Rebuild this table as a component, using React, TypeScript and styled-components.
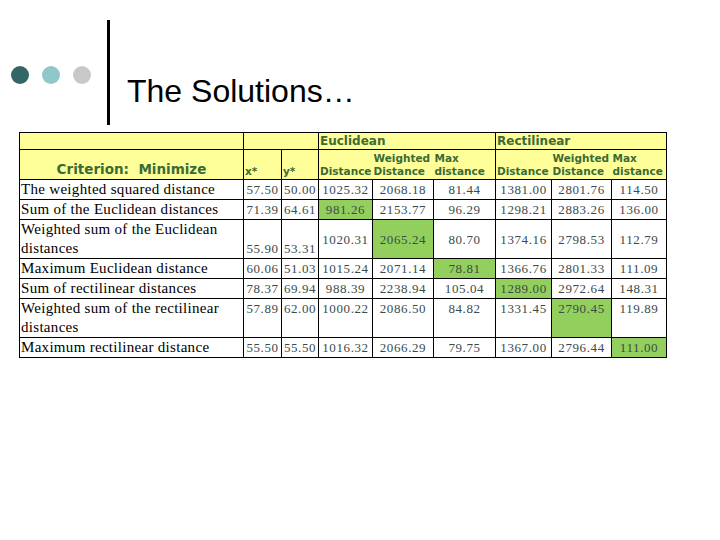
import styled, { createGlobalStyle } from "styled-components";

const GlobalStyle = createGlobalStyle`
  html, body {
    margin: 0;
    padding: 0;
    background: #ffffff;
  }
  body {
    width: 720px;
    height: 540px;
    overflow: hidden;
    font-family: "Liberation Sans", Arial, sans-serif;
  }
`;

const Page = styled.div`
  display: flex;
  flex-direction: column;
  width: 720px;
  height: 540px;
  padding-top: 20px;
  box-sizing: border-box;
`;

const Header = styled.header`
  display: flex;
  align-items: flex-start;
  height: 112px;
  padding-left: 11px;
`;

const Dots = styled.div`
  display: flex;
  gap: 13px;
  margin-top: 46px;
`;

const Dot = styled.span<{ $color: string }>`
  width: 18px;
  height: 18px;
  border-radius: 50%;
  background: ${({ $color }) => $color};
`;

const Rule = styled.div`
  width: 3px;
  height: 105px;
  margin-left: 16px;
  background: #000000;
`;

const Title = styled.h1`
  margin: 55px 0 0 17px;
  font-family: "Liberation Sans", Arial, sans-serif;
  font-size: 32px;
  font-weight: normal;
  line-height: 1;
  color: #000000;
`;

const Grid = styled.table`
  margin-left: 19px;
  width: 648px;
  border-collapse: collapse;
  table-layout: fixed;
`;

type TOpen = { $openLeft?: boolean; $openRight?: boolean };

const Head = styled.th<TOpen>`
  background: #ffff99;
  color: #3a6b35;
  border: 1px solid #000000;
  ${({ $openLeft }) => ($openLeft ? "border-left-style: none;" : "")}
  ${({ $openRight }) => ($openRight ? "border-right-style: none;" : "")}
  padding: 0 1px;
  font-family: "DejaVu Sans", Verdana, sans-serif;
  font-weight: bold;
  text-align: left;
`;

const GroupHead = styled(Head)`
  font-size: 12px;
  line-height: 14px;
  vertical-align: middle;
`;

const SubHead = styled(Head)`
  font-size: 10.5px;
  line-height: 13px;
  vertical-align: bottom;
  padding-bottom: 1px;
`;

const CriterionHead = styled(Head)`
  font-size: 13.5px;
  line-height: 16px;
  text-align: center;
  vertical-align: bottom;
  padding-bottom: 2px;
`;

const Row = styled.tr<{ $h: number }>`
  height: ${({ $h }) => $h}px;
`;

const LabelCell = styled.td`
  border: 1px solid #000000;
  padding: 0 1px;
  font-family: "Liberation Serif", "Times New Roman", serif;
  font-size: 15px;
  letter-spacing: 0.3px;
  line-height: 19px;
  color: #000000;
  vertical-align: middle;
`;

const NumCell = styled.td<{ $hl?: boolean; $valign?: string }>`
  border: 1px solid #000000;
  padding: 0;
  background: ${({ $hl }) => ($hl ? "#93cf5c" : "#ffffff")};
  font-family: "Liberation Serif", "Times New Roman", serif;
  font-size: 13px;
  letter-spacing: 0.6px;
  line-height: 19px;
  color: #3b4b4b;
  text-align: center;
  vertical-align: ${({ $valign }) => $valign || "middle"};
`;

type TRow = {
  label: string;
  x: string;
  y: string;
  values: string[];
  hl: number;
  h: number;
  xyAlign?: string;
  align?: string;
};

const rows: TRow[] = [
  { label: "The weighted squared distance", x: "57.50", y: "50.00", values: ["1025.32", "2068.18", "81.44", "1381.00", "2801.76", "114.50"], hl: -1, h: 19 },
  { label: "Sum of the Euclidean distances", x: "71.39", y: "64.61", values: ["981.26", "2153.77", "96.29", "1298.21", "2883.26", "136.00"], hl: 0, h: 20 },
  { label: "Weighted sum of the Euclidean distances", x: "55.90", y: "53.31", values: ["1020.31", "2065.24", "80.70", "1374.16", "2798.53", "112.79"], hl: 1, h: 39, xyAlign: "bottom" },
  { label: "Maximum Euclidean distance", x: "60.06", y: "51.03", values: ["1015.24", "2071.14", "78.81", "1366.76", "2801.33", "111.09"], hl: 2, h: 20 },
  { label: "Sum of rectilinear distances", x: "78.37", y: "69.94", values: ["988.39", "2238.94", "105.04", "1289.00", "2972.64", "148.31"], hl: 3, h: 20 },
  { label: "Weighted sum of the rectilinear distances", x: "57.89", y: "62.00", values: ["1000.22", "2086.50", "84.82", "1331.45", "2790.45", "119.89"], hl: 4, h: 37, align: "top" },
  { label: "Maximum rectilinear distance", x: "55.50", y: "55.50", values: ["1016.32", "2066.29", "79.75", "1367.00", "2796.44", "111.00"], hl: 5, h: 20 },
];

const colWidths = [224, 38, 37, 54, 61, 62, 56, 60, 55];

const App = () => {
  return (
    <Page>
      <GlobalStyle />
      <Header>
        <Dots>
          <Dot $color="#336666" />
          <Dot $color="#8ec8c8" />
          <Dot $color="#c8c8c8" />
        </Dots>
        <Rule />
        <Title>The Solutions…</Title>
      </Header>

      <Grid>
        <colgroup>
          {colWidths.map((w, i) => (
            <col key={i} style={{ width: w }} />
          ))}
        </colgroup>
        <thead>
          <Row $h={17}>
            <GroupHead />
            <GroupHead colSpan={2} />
            <GroupHead colSpan={3}>Euclidean</GroupHead>
            <GroupHead colSpan={3}>Rectilinear</GroupHead>
          </Row>
          <Row $h={30}>
            <CriterionHead>Criterion:&nbsp; Minimize</CriterionHead>
            <SubHead>x*</SubHead>
            <SubHead>y*</SubHead>
            <SubHead $openRight>Distance</SubHead>
            <SubHead $openLeft $openRight>Weighted Distance</SubHead>
            <SubHead $openLeft>Max distance</SubHead>
            <SubHead $openRight>Distance</SubHead>
            <SubHead $openLeft $openRight>Weighted Distance</SubHead>
            <SubHead $openLeft>Max distance</SubHead>
          </Row>
        </thead>
        <tbody>
          {rows.map((r) => (
            <Row key={r.label} $h={r.h}>
              <LabelCell>{r.label}</LabelCell>
              <NumCell $valign={r.xyAlign || r.align}>{r.x}</NumCell>
              <NumCell $valign={r.xyAlign || r.align}>{r.y}</NumCell>
              {r.values.map((v, i) => (
                <NumCell key={i} $hl={i === r.hl} $valign={r.align}>
                  {v}
                </NumCell>
              ))}
            </Row>
          ))}
        </tbody>
      </Grid>
    </Page>
  );
};

export default App;
